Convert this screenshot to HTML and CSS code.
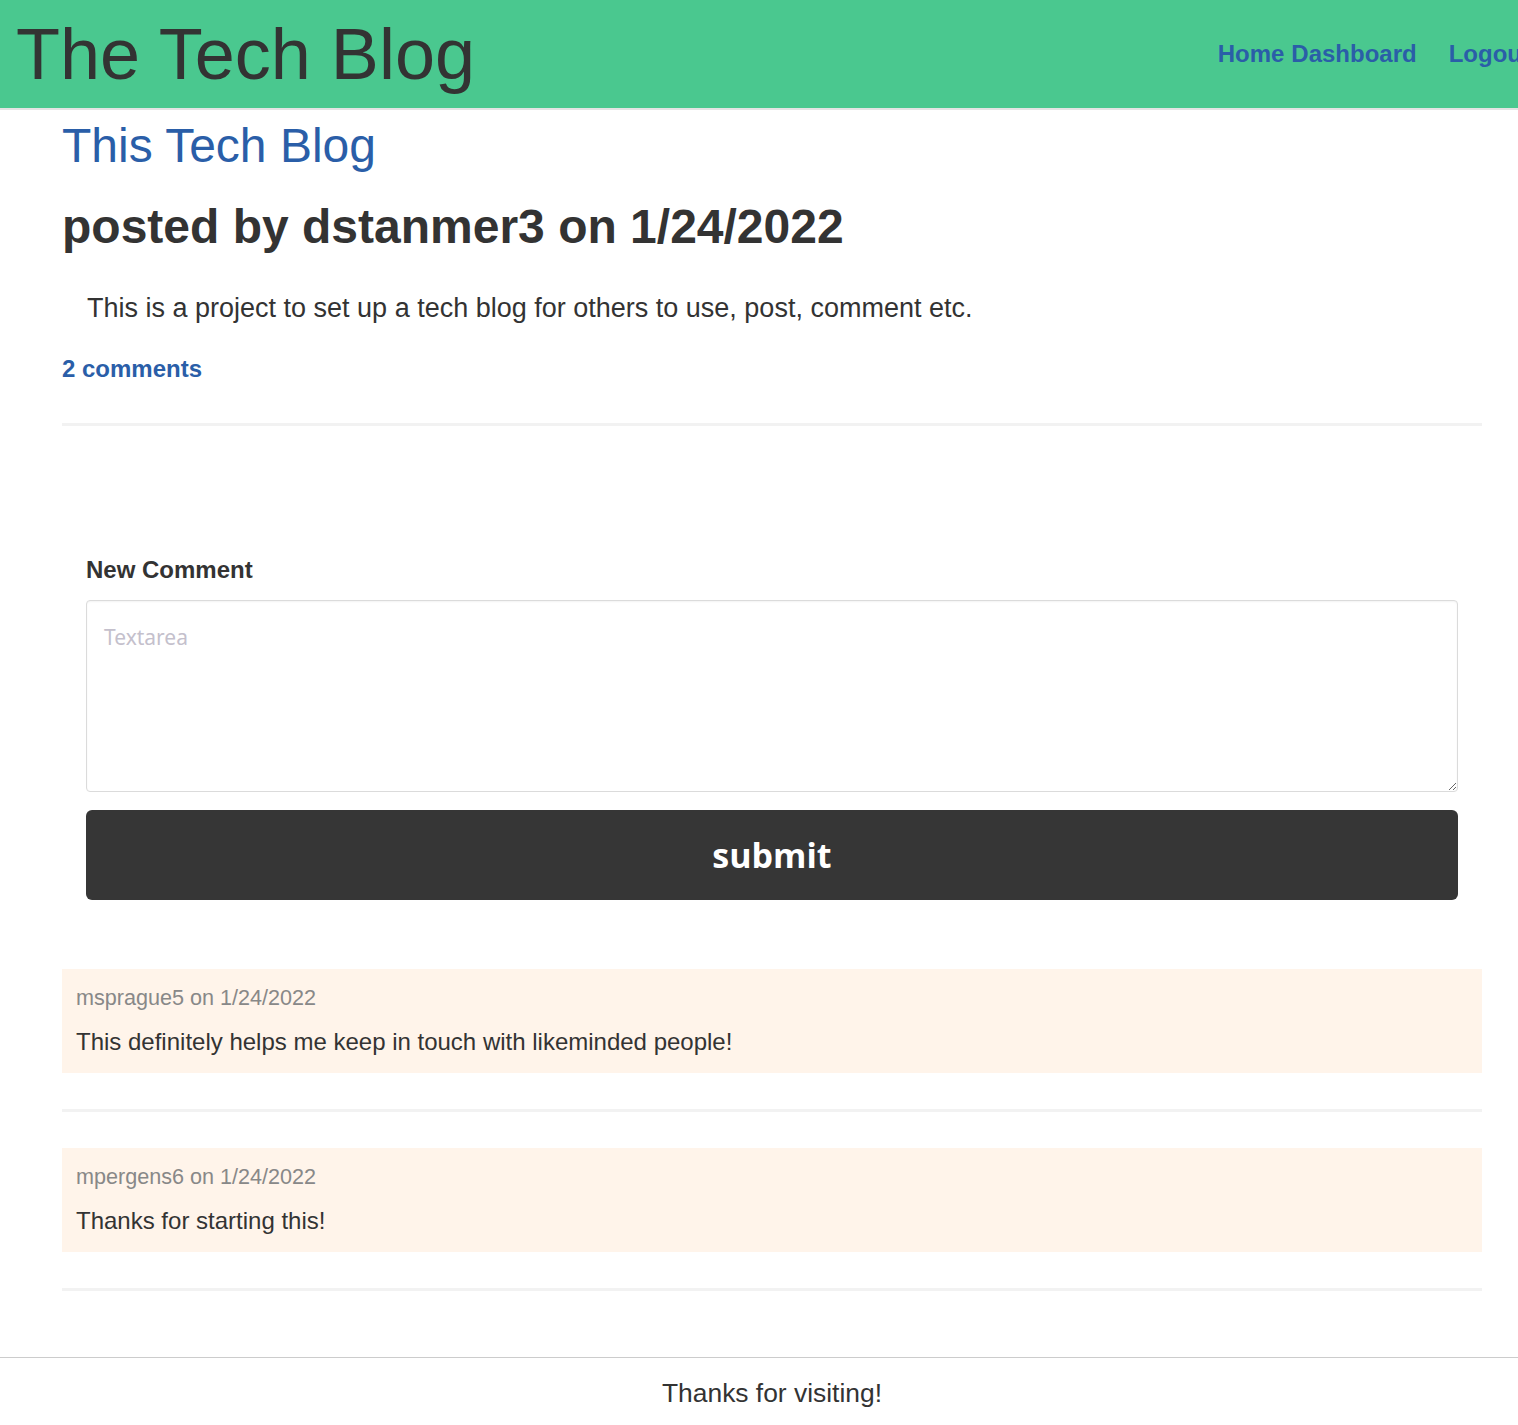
FILE: index.html
```html
<!DOCTYPE html>
<html lang="en">
<head>
<meta charset="utf-8">
<title>The Tech Blog</title>
<link rel="stylesheet" href="styles.css">
</head>
<body>
<div class="page">
<header class="site-header">
  <h1 class="site-title">The Tech Blog</h1>
  <nav class="site-nav">
    <a href="#" class="nav-link">Home</a>
    <a href="#" class="nav-link">Dashboard</a>
    <a href="#" class="nav-link nav-gap">Logout</a>
  </nav>
</header>
<main class="content">
  <article class="post">
    <h2 class="post-title">This Tech Blog</h2>
    <h3 class="post-meta">posted by dstanmer3 on 1/24/2022</h3>
    <p class="post-body">This is a project to set up a tech blog for others to use, post, comment etc.</p>
    <a href="#" class="comment-count">2 comments</a>
  </article>
  <hr class="divider">
  <form class="comment-form">
    <label class="form-label" for="c">New Comment</label>
    <textarea id="c" class="textarea" placeholder="Textarea"></textarea>
    <button type="button" class="submit-btn">submit</button>
  </form>
  <section class="comments">
    <div class="comment">
      <p class="comment-meta">msprague5 on 1/24/2022</p>
      <p class="comment-text">This definitely helps me keep in touch with likeminded people!</p>
    </div>
    <hr class="divider">
    <div class="comment">
      <p class="comment-meta">mpergens6 on 1/24/2022</p>
      <p class="comment-text">Thanks for starting this!</p>
    </div>
    <hr class="divider">
  </section>
</main>
<footer class="site-footer">Thanks for visiting!</footer>
</div>
</body>
</html>
```
FILE: styles.css
```css
html, body {
  margin: 0;
  padding: 0;
  overflow-x: hidden;
}
body {
  font-family: "Liberation Sans", Arial, sans-serif;
  color: #333;
  background: #fff;
}
.page {
  width: 1544px;
}
.site-header {
  display: flex;
  align-items: center;
  justify-content: space-between;
  box-sizing: border-box;
  height: 110px;
  background: #4ac88f;
  border-bottom: 2px solid #e4e4e4;
  padding: 0 14px 0 16px;
  white-space: nowrap;
}
.site-title {
  margin: 0;
  font-size: 72px;
  font-weight: 400;
  color: #333;
  line-height: 1;
}
.site-nav {
  display: flex;
  align-items: baseline;
}
.nav-link {
  font-size: 24px;
  font-weight: 700;
  color: #2a5ea8;
  text-decoration: none;
  margin-left: 7px;
}
.nav-gap {
  margin-left: 32px;
}
.content {
  padding: 0 62px;
}
.post-title {
  margin: 7px 0 0;
  font-size: 48px;
  font-weight: 400;
  color: #2a5ea8;
  line-height: 1.2;
}
.post-meta {
  margin: 23px 0 0;
  font-size: 48px;
  font-weight: 700;
  color: #333;
  line-height: 1.2;
}
.post-body {
  margin: 37px 0 0 25px;
  font-size: 27px;
  line-height: 1.2;
}
.comment-count {
  display: block;
  width: fit-content;
  margin-top: 30px;
  font-size: 24px;
  font-weight: 700;
  color: #2a5ea8;
  text-decoration: none;
}
.divider {
  border: none;
  height: 3px;
  background: #f2f2f2;
  margin: 40px 0 0;
}
.comment-form {
  display: flex;
  flex-direction: column;
  padding: 130px 24px 0;
}
.form-label {
  font-size: 24px;
  font-weight: 700;
  color: #333;
  margin-bottom: 16px;
}
.textarea {
  height: 192px;
  box-sizing: border-box;
  border: 1px solid #dbdbdb;
  border-radius: 4px;
  padding: 22px 17px;
  font-family: "Noto Sans", "Open Sans", sans-serif;
  font-size: 21px;
  resize: vertical;
  box-shadow: inset 0 1px 2px rgba(10,10,10,0.05);
}
.textarea::placeholder {
  color: #c4c0cc;
}
.submit-btn {
  margin-top: 18px;
  height: 90px;
  background: #363636;
  color: #fff;
  border: none;
  border-radius: 6px;
  font-family: "Open Sans", "Noto Sans", sans-serif;
  font-size: 34px;
  font-weight: 700;
}
.comments {
  margin-top: 69px;
}
.comment {
  background: #fff4ea;
  padding: 16px 14px 17px;
}
.comment-meta {
  margin: 0;
  font-size: 21.6px;
  color: #888;
}
.comment-text {
  margin: 17px 0 0;
  font-size: 24px;
  color: #333;
}
.comments .divider {
  margin: 36px 0;
}
.comments .divider:last-child {
  margin-bottom: 0;
}
.site-footer {
  margin-top: 66px;
  border-top: 1px solid #ccc;
  text-align: center;
  font-size: 26.4px;
  padding: 20px 0;
}
```
